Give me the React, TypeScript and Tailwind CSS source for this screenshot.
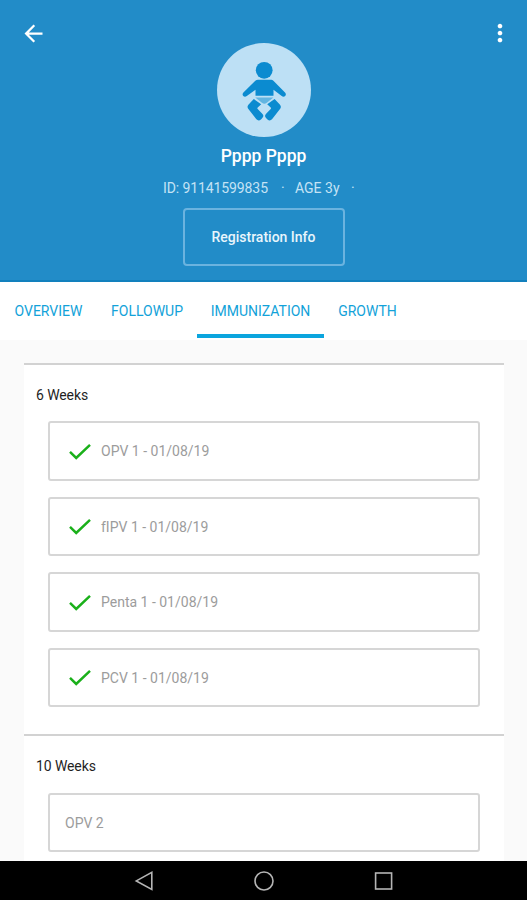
import type { ReactNode } from 'react';
import { MdArrowBack, MdMoreVert } from 'react-icons/md';

const tabs = [
  { label: 'OVERVIEW', width: 'w-[97px]' },
  { label: 'FOLLOWUP', width: 'w-[100px]' },
  { label: 'IMMUNIZATION', width: 'w-[127px]', active: true },
  { label: 'GROWTH', width: 'w-[87px]' },
];

const sections = [
  {
    title: '6 Weeks',
    vaccines: [
      { name: 'OPV 1 - 01/08/19', done: true },
      { name: 'fIPV 1 - 01/08/19', done: true },
      { name: 'Penta 1 - 01/08/19', done: true },
      { name: 'PCV 1 - 01/08/19', done: true },
    ],
  },
  { title: '10 Weeks', vaccines: [{ name: 'OPV 2', done: false }] },
];

function BabyIcon() {
  return (
    <svg viewBox="0 0 94 94" className="h-[94px] w-[94px]">
      <circle cx="47" cy="47" r="47" fill="#bde0f5" />
      <g fill="#0b8bd0">
        <circle cx="47.2" cy="27.3" r="8.4" />
        <path d="M41 36.8h12.6c1.2 0 2 .3 2.8 1l11.6 11.6c2.4 2.5-.7 5.7-3.3 3.6l-8.2-6.2V52.7H38.5v-5.9L29.8 53c-2.7 2-5.7-1.1-3.4-3.6L38.3 37.8c.8-.7 1.6-1 2.7-1z" />
        <path d="M36.8 56l7.4 5.3-3.5 3.1c-.5.5-.5 1 0 1.5l4.8 5.1c1.6 1.8.6 3.2-.6 4.5l-1 1c-1.6 1.3-3.2 1.1-4.5-.2l-8-10.2c-1.2-1.6-1.2-3.2.2-4.7z" />
        <path d="M57.6 56l-7.4 5.3 3.5 3.1c.5.5.5 1 0 1.5l-4.8 5.1c-1.6 1.8-.6 3.2.6 4.5l1 1c1.6 1.3 3.2 1.1 4.5-.2l8-10.2c1.2-1.6 1.2-3.2-.2-4.7z" />
      </g>
      <path d="M38.2 54.5h18.2l-6.6 5.3c-1.7 1.3-3.2 1.3-4.9 0z" fill="#62b5e1" />
    </svg>
  );
}

function Check() {
  return (
    <svg viewBox="0 0 22 18" className="ml-[19px] mr-2.5 mt-[2px] h-[18px] w-[22px]" fill="none" stroke="#1ab01a" strokeWidth="2.5">
      <path d="M1 8.9l6.2 6L21 1.8" />
    </svg>
  );
}

function VaccineBox({ done, children }: { done: boolean; children: ReactNode }) {
  return (
    <div className="flex h-[59.5px] items-center rounded-[3px] border-2 border-[#d6d6d6] text-[14px] text-[#9c9c9c]">
      {done ? <Check /> : <span className="w-[15px]" />}
      <span className="pt-[2px]">{children}</span>
    </div>
  );
}

export default function App() {
  return (
    <div className="flex h-[900px] w-[527px] flex-col overflow-hidden bg-[#fafafa] font-['Roboto',sans-serif]">
      {/* Profile header */}
      <header className="relative flex h-[282px] shrink-0 flex-col items-center border-b-2 border-[#1280bd] bg-[#228cc8] pt-[43px] text-white">
        <MdArrowBack className="absolute left-[20px] top-[20px] size-[27px]" />
        <MdMoreVert className="absolute right-[13px] top-[19px] size-[28px]" />
        <BabyIcon />
        <h1 className="mt-[7px] text-[17.5px] font-medium leading-6">Pppp Pppp</h1>
        <div className="mt-[10px] flex text-[14px] leading-5 text-[#c5e3f5]">
          <span className="w-[118px] tracking-[-0.1px]">ID: 91141599835</span>
          <span className="w-[14px]">·</span>
          <span className="w-[56px]">AGE 3y</span>
          <span className="w-[13px]">·</span>
        </div>
        <button className="mt-[10px] h-[58px] w-[162px] rounded-[4px] border-2 border-[#6bb3df] pt-px text-[14px] font-medium text-[#e8f5fc]">
          Registration Info
        </button>
      </header>

      {/* Tabs */}
      <nav className="flex h-[58px] shrink-0 bg-white pb-[2px] text-[14px] text-[#12a2d9]">
        {tabs.map((tab) => (
          <div
            key={tab.label}
            className={`flex shrink-0 items-center justify-center border-b-4 pt-[6px] ${tab.width} ${tab.active ? 'border-[#0ba5de]' : 'border-transparent'}`}
          >
            {tab.label}
          </div>
        ))}
      </nav>

      {/* Schedule */}
      <main className="min-h-0 flex-1 overflow-hidden pl-6 pr-[23px] pt-[22.5px]">
        {sections.map((section) => (
          <section key={section.title} className="h-[371.5px] border-t-2 border-[#d2d2d2] bg-white px-6">
            <h2 className="-ml-3 pt-[20px] text-[14px] leading-5 tracking-[-0.1px] text-[#1f1f1f]">{section.title}</h2>
            <div className="mt-[16.5px] flex flex-col gap-4">
              {section.vaccines.map((v) => (
                <VaccineBox key={v.name} done={v.done}>
                  {v.name}
                </VaccineBox>
              ))}
            </div>
          </section>
        ))}
      </main>

      {/* Android navigation bar */}
      <footer className="flex h-[39px] shrink-0 items-center justify-center gap-[100px] bg-black">
        <svg viewBox="0 0 20 20" className="size-5" fill="none" stroke="#b5b5b5" strokeWidth="1.6">
          <path d="M17.8 1.4v17L2.3 9.9z" />
        </svg>
        <svg viewBox="0 0 20 20" className="size-5" fill="none" stroke="#b5b5b5" strokeWidth="1.6">
          <circle cx="10" cy="10" r="9" />
        </svg>
        <svg viewBox="0 0 20 20" className="size-5" fill="none" stroke="#b5b5b5" strokeWidth="1.6">
          <rect x="1.6" y="2" width="16" height="16" />
        </svg>
      </footer>
    </div>
  );
}
